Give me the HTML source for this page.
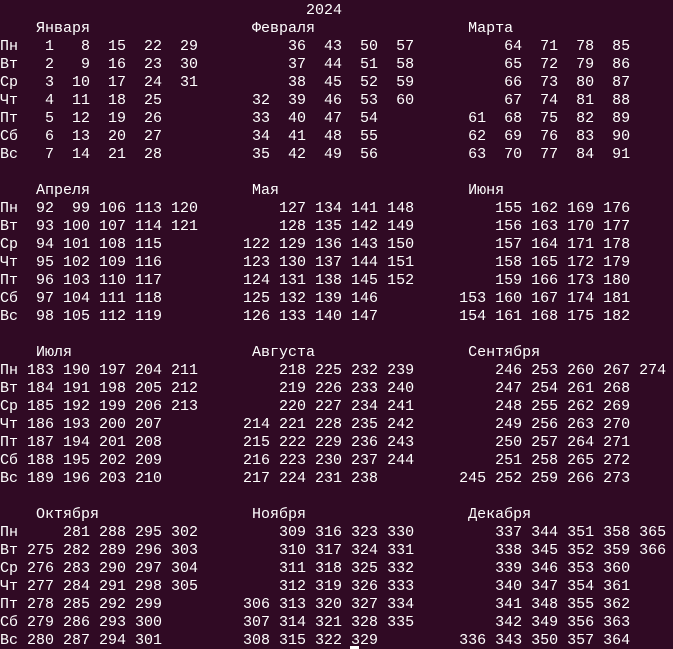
<!DOCTYPE html>
<html><head><meta charset="utf-8"><style>
html,body{margin:0;padding:0;background:#300a24;width:673px;height:649px;overflow:hidden;}
pre{margin:0;padding:2px 0 0 0;font-family:"Liberation Mono",monospace;font-size:15px;line-height:18px;color:#ffffff;white-space:pre;}
#cur{position:absolute;left:350px;top:646px;width:9px;height:3px;background:#fff;}
</style></head><body><pre>                                  2024
    Января                  Февраля                 Марта
Пн   1   8  15  22  29          36  43  50  57          64  71  78  85
Вт   2   9  16  23  30          37  44  51  58          65  72  79  86
Ср   3  10  17  24  31          38  45  52  59          66  73  80  87
Чт   4  11  18  25          32  39  46  53  60          67  74  81  88
Пт   5  12  19  26          33  40  47  54          61  68  75  82  89
Сб   6  13  20  27          34  41  48  55          62  69  76  83  90
Вс   7  14  21  28          35  42  49  56          63  70  77  84  91

    Апреля                  Мая                     Июня
Пн  92  99 106 113 120         127 134 141 148         155 162 169 176
Вт  93 100 107 114 121         128 135 142 149         156 163 170 177
Ср  94 101 108 115         122 129 136 143 150         157 164 171 178
Чт  95 102 109 116         123 130 137 144 151         158 165 172 179
Пт  96 103 110 117         124 131 138 145 152         159 166 173 180
Сб  97 104 111 118         125 132 139 146         153 160 167 174 181
Вс  98 105 112 119         126 133 140 147         154 161 168 175 182

    Июля                    Августа                 Сентября
Пн 183 190 197 204 211         218 225 232 239         246 253 260 267 274
Вт 184 191 198 205 212         219 226 233 240         247 254 261 268
Ср 185 192 199 206 213         220 227 234 241         248 255 262 269
Чт 186 193 200 207         214 221 228 235 242         249 256 263 270
Пт 187 194 201 208         215 222 229 236 243         250 257 264 271
Сб 188 195 202 209         216 223 230 237 244         251 258 265 272
Вс 189 196 203 210         217 224 231 238         245 252 259 266 273

    Октября                 Ноября                  Декабря
Пн     281 288 295 302         309 316 323 330         337 344 351 358 365
Вт 275 282 289 296 303         310 317 324 331         338 345 352 359 366
Ср 276 283 290 297 304         311 318 325 332         339 346 353 360
Чт 277 284 291 298 305         312 319 326 333         340 347 354 361
Пт 278 285 292 299         306 313 320 327 334         341 348 355 362
Сб 279 286 293 300         307 314 321 328 335         342 349 356 363
Вс 280 287 294 301         308 315 322 329         336 343 350 357 364</pre><div id="cur"></div></body></html>
